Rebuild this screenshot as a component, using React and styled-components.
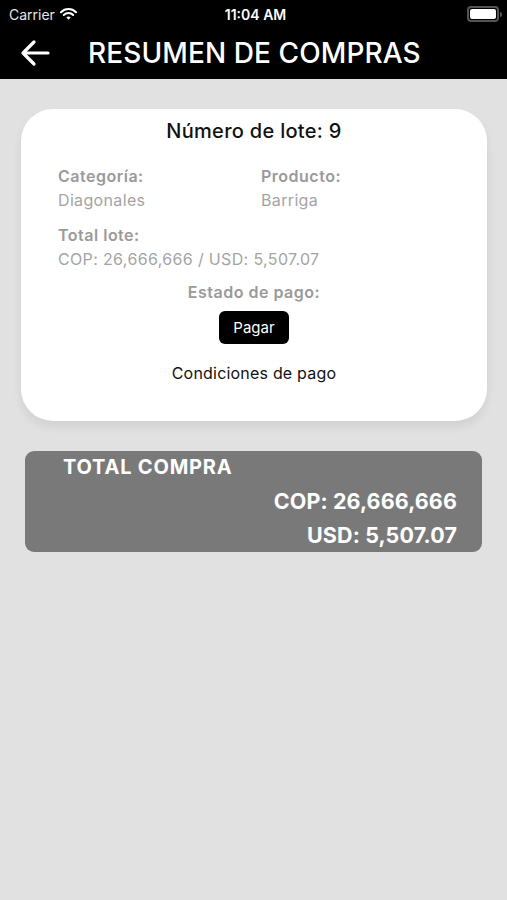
import React from 'react';
import styled, { createGlobalStyle } from 'styled-components';

const GlobalStyle = createGlobalStyle`
  html, body {
    margin: 0;
    padding: 0;
    background: #e1e1e1;
    font-family: Inter, "Liberation Sans", Arial, sans-serif;
  }
`;

const Screen = styled.div`
  width: 507px;
  min-height: 900px;
  background: #e1e1e1;
`;

const TopBar = styled.div`
  background: #000;
  color: #fff;
  height: 79px;
  display: flex;
  flex-direction: column;
`;

const StatusBar = styled.div`
  height: 28px;
  display: grid;
  grid-template-columns: 1fr auto 1fr;
  align-items: center;
  padding: 0 5px 0 9px;
  font-size: 14px;
`;

const Carrier = styled.div`
  display: flex;
  align-items: center;
  gap: 5px;
  color: #e6e6e6;
`;

const Clock = styled.div`
  font-weight: 600;
  font-size: 14px;
`;

const Battery = styled.div`
  justify-self: end;
  display: flex;
  align-items: center;
`;

const BatteryBody = styled.div`
  width: 26px;
  height: 10px;
  border: 2px solid #555;
  border-radius: 4px;
  padding: 1px;
  box-sizing: content-box;
  &::after {
    content: '';
    display: block;
    width: 100%;
    height: 100%;
    background: #fff;
    border-radius: 2px;
  }
`;

const BatteryTip = styled.div`
  width: 2px;
  height: 5px;
  background: #555;
  border-radius: 0 2px 2px 0;
  margin-left: 1px;
`;

const NavRow = styled.div`
  flex: 1;
  display: flex;
  align-items: center;
  padding: 0 0 2px 20px;
  gap: 38px;
`;

const Title = styled.h1`
  margin: 0;
  font-size: 28px;
  font-weight: 500;
  letter-spacing: 0.1px;
`;

const Content = styled.div`
  padding: 30px 20px 0 21px;
  display: flex;
  flex-direction: column;
`;

const Card = styled.div`
  background: #fff;
  border-radius: 32px;
  box-shadow: 0 6px 10px rgba(0, 0, 0, 0.07);
  padding: 10px 37px 38px;
  display: flex;
  flex-direction: column;
`;

const CardTitle = styled.div`
  text-align: center;
  font-size: 20px;
  font-weight: 500;
  letter-spacing: 0.3px;
  color: #111;
`;

const FieldGrid = styled.div`
  display: grid;
  grid-template-columns: 203px 1fr;
  margin-top: 23px;
`;

const Field = styled.div`
  display: flex;
  flex-direction: column;
  gap: 4px;
  margin-bottom: ${(p) => p.$mb || 0}px;
  margin-top: ${(p) => p.$mt || 0}px;
  text-align: ${(p) => (p.$center ? 'center' : 'left')};
`;

const Label = styled.div`
  font-size: 16px;
  font-weight: 600;
  letter-spacing: 0.5px;
  color: #9a9a9a;
`;

const Value = styled.div`
  font-size: 16px;
  letter-spacing: 0.35px;
  color: #a4a4a4;
`;

const PayButton = styled.button`
  align-self: center;
  margin-top: 9px;
  background: #000;
  color: #fff;
  border: none;
  border-radius: 6px;
  width: 70px;
  height: 33px;
  font-family: inherit;
  font-size: 15px;
`;

const Conditions = styled.div`
  text-align: center;
  margin-top: 19px;
  font-size: 16px;
  letter-spacing: 0.2px;
  color: #111;
`;

const TotalBox = styled.div`
  margin: 30px 5px 0 4px;
  background: #7a797a;
  border-radius: 9px;
  color: #fff;
  padding: 4px 25px 0 38px;
  display: flex;
  flex-direction: column;
  font-weight: 700;
`;

const TotalLabel = styled.div`
  font-size: 20px;
  line-height: 24px;
  letter-spacing: 0.8px;
  margin-bottom: 5px;
`;

const TotalValue = styled.div`
  align-self: flex-end;
  font-size: 21.5px;
  line-height: 34px;
  letter-spacing: 0.1px;
`;

const WifiIcon = () => (
  <svg width="17" height="12" viewBox="0 0 17 12">
    <path d="M1 4.2a10.5 10.5 0 0 1 15 0" stroke="#fff" strokeWidth="2" fill="none" strokeLinecap="round" />
    <path d="M3.8 7a6.5 6.5 0 0 1 9.4 0" stroke="#fff" strokeWidth="2" fill="none" strokeLinecap="round" />
    <path d="M6.3 9.6 8.5 11.8 10.7 9.6a3 3 0 0 0-4.4 0z" fill="#fff" />
  </svg>
);

const BackArrow = () => (
  <svg width="30" height="28" viewBox="0 0 30 28">
    <path d="M28 14H3M14 3 3 14l11 11" stroke="#fff" strokeWidth="3.2" fill="none" strokeLinecap="round" strokeLinejoin="round" />
  </svg>
);

const App = () => {
  return (
    <>
      <GlobalStyle />
      <Screen>
        <TopBar>
          <StatusBar>
            <Carrier>
              Carrier <WifiIcon />
            </Carrier>
            <Clock>11:04 AM</Clock>
            <Battery>
              <BatteryBody />
              <BatteryTip />
            </Battery>
          </StatusBar>
          <NavRow>
            <BackArrow />
            <Title>RESUMEN DE COMPRAS</Title>
          </NavRow>
        </TopBar>
        <Content>
          <Card>
            <CardTitle>Número de lote: 9</CardTitle>
            <FieldGrid>
              <Field $mb={15}>
                <Label>Categoría:</Label>
                <Value>Diagonales</Value>
              </Field>
              <Field $mb={15}>
                <Label>Producto:</Label>
                <Value>Barriga</Value>
              </Field>
            </FieldGrid>
            <Field>
              <Label>Total lote:</Label>
              <Value>COP: 26,666,666 / USD: 5,507.07</Value>
            </Field>
            <Field $center $mt={13}>
              <Label>Estado de pago:</Label>
            </Field>
            <PayButton>Pagar</PayButton>
            <Conditions>Condiciones de pago</Conditions>
          </Card>
          <TotalBox>
            <TotalLabel>TOTAL COMPRA</TotalLabel>
            <TotalValue>COP: 26,666,666</TotalValue>
            <TotalValue>USD: 5,507.07</TotalValue>
          </TotalBox>
        </Content>
      </Screen>
    </>
  );
};

export default App;
